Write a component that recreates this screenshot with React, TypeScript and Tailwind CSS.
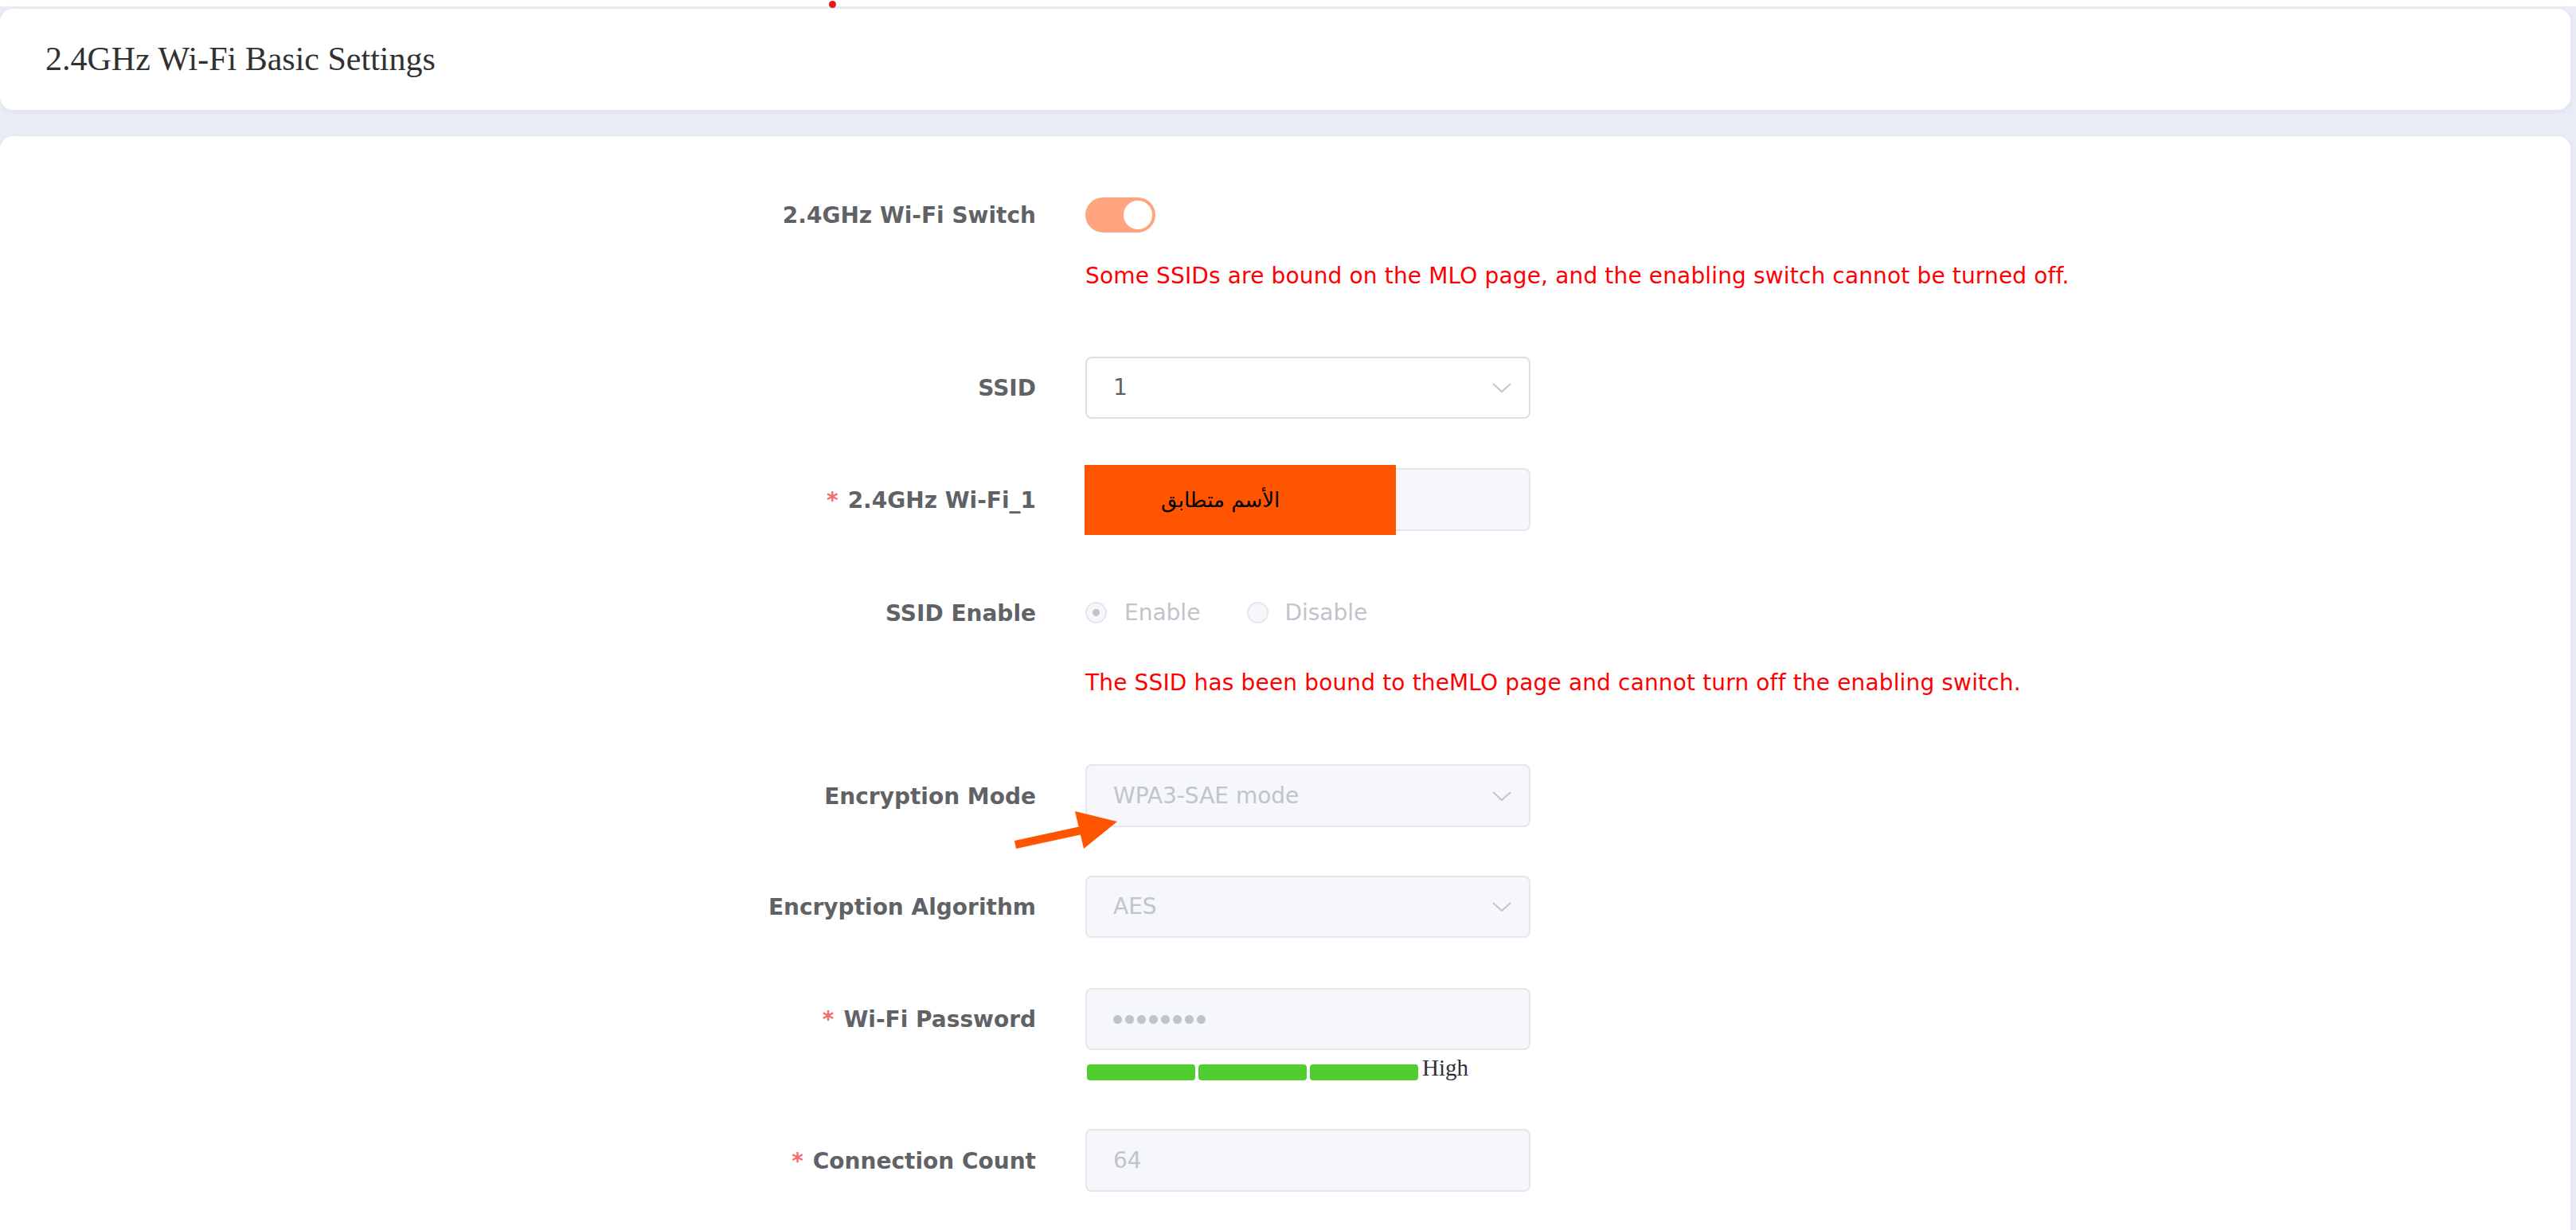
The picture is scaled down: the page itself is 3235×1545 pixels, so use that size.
import React from 'react';

const label = "font-['DejaVu_Sans',sans-serif] font-bold text-[28px] text-[#606266]";
const body = "font-['DejaVu_Sans',sans-serif] text-[28px]";

function Label({ text, required }: { text: string; required?: boolean }) {
  return (
    <div className={`w-[1301px] shrink-0 flex justify-end items-center pt-[2px] ${label}`}>
      {required && <span className="text-[#f56c6c] mr-[12px]">*</span>}
      <span>{text}</span>
    </div>
  );
}

function Chevron() {
  return (
    <svg width="24" height="12" viewBox="0 0 24 12" className="absolute right-[22px] top-1/2 -translate-y-1/2">
      <polyline points="1,1 12,11 23,1" fill="none" stroke="#c0c4cc" strokeWidth="2" />
    </svg>
  );
}

function SelectBox({ value, disabled }: { value: string; disabled?: boolean }) {
  return (
    <div
      className={`relative w-[559px] h-full flex items-center pl-[33px] rounded-[8px] border-2 ${body} ${
        disabled ? 'bg-[#f5f7fa] border-[#e4e7ed] text-[#c0c4cc]' : 'bg-white border-[#dcdfe6] text-[#606266]'
      }`}
    >
      {value}
      <Chevron />
    </div>
  );
}

export default function App() {
  return (
    <div className="relative min-h-screen bg-[#eaedf6]">
      {/* top strip + dot */}
      <div className="h-[8px] bg-white" />
      <div className="absolute left-[1041px] top-[1px] w-[9px] h-[9px] rounded-full bg-[#e3191c]" />

      <div className="pt-[3px] pr-[7px]">
        {/* header card */}
        <div className="h-[127px] bg-white rounded-[16px] shadow-[0_2px_10px_rgba(180,190,215,0.25)] flex items-center pl-[57px]">
          <h1 className="font-['Liberation_Serif',serif] text-[42px] text-[#303133]">2.4GHz Wi-Fi Basic Settings</h1>
        </div>

        {/* form card */}
        <div className="mt-[33px] bg-white rounded-[16px] shadow-[0_2px_10px_rgba(180,190,215,0.25)] pt-[60px] pb-[120px]">
          {/* switch */}
          <div className="flex h-[78px] items-center">
            <Label text="2.4GHz Wi-Fi Switch" />
            <div className="ml-[62px] w-[88px] h-[44px] rounded-full bg-[#ffa47e] flex items-center justify-end pr-[4px]">
              <div className="w-[36px] h-[36px] rounded-full bg-white" />
            </div>
          </div>
          <div className={`mt-[18px] ml-[1363px] leading-[40px] tracking-[0.15px] text-[#ff0000] ${body}`}>
            Some SSIDs are bound on the MLO page, and the enabling switch cannot be turned off.
          </div>

          {/* SSID */}
          <div className="mt-[81px] flex h-[78px] items-center">
            <Label text="SSID" />
            <div className="ml-[62px] h-full">
              <SelectBox value="1" />
            </div>
          </div>

          {/* name */}
          <div className="mt-[62px] flex h-[79px] items-center">
            <Label text="2.4GHz Wi-Fi_1" required />
            <div className="ml-[62px] h-full relative">
              <div className="w-[559px] h-full rounded-[8px] border-2 bg-[#f5f7fa] border-[#e4e7ed]" />
              <div className="absolute left-[-1px] top-[-4px] w-[391px] h-[88px] bg-[#ff5500] flex items-center">
                <span dir="rtl" className="ml-[96px] font-['DejaVu_Sans',sans-serif] text-[26px] text-black">الأسم متطابق</span>
              </div>
            </div>
          </div>

          {/* SSID enable */}
          <div className="mt-[63px] flex h-[79px] items-center">
            <Label text="SSID Enable" />
            <div className={`ml-[62px] flex items-center text-[#c0c4cc] ${body}`}>
              <div className="w-[27px] h-[27px] rounded-full border-2 border-[#e4e7ed] bg-[#f5f7fa] flex items-center justify-center">
                <div className="w-[9px] h-[9px] rounded-full bg-[#c0c4cc]" />
              </div>
              <span className="ml-[22px]">Enable</span>
              <div className="ml-[59px] w-[27px] h-[27px] rounded-full border-2 border-[#e4e7ed] bg-[#f5f7fa]" />
              <span className="ml-[20px]">Disable</span>
            </div>
          </div>
          <div className={`mt-[29px] ml-[1363px] leading-[40px] tracking-[0.15px] text-[#ff0000] ${body}`}>
            The SSID has been bound to theMLO page and cannot turn off the enabling switch.
          </div>

          {/* encryption mode */}
          <div className="relative mt-[82px] flex h-[79px] items-center">
            <Label text="Encryption Mode" />
            <div className="ml-[62px] h-full">
              <SelectBox value="WPA3-SAE mode" disabled />
            </div>
            <svg width="140" height="60" viewBox="0 0 140 60" className="absolute left-[1268px] top-[52px]">
              <line x1="7" y1="49" x2="90" y2="31" stroke="#ff5500" strokeWidth="10" />
              <polygon points="82,7 135,20 93,54" fill="#ff5500" />
            </svg>
          </div>

          {/* algorithm */}
          <div className="mt-[61px] flex h-[78px] items-center">
            <Label text="Encryption Algorithm" />
            <div className="ml-[62px] h-full">
              <SelectBox value="AES" disabled />
            </div>
          </div>

          {/* password */}
          <div className="mt-[63px] flex h-[78px] items-center">
            <Label text="Wi-Fi Password" required />
            <div className="ml-[62px] h-full">
              <div className="w-[559px] h-full rounded-[8px] border-2 bg-[#f5f7fa] border-[#e4e7ed] flex items-center pl-[33px] gap-[4px]">
                {Array.from({ length: 8 }).map((_, i) => (
                  <div key={i} className="w-[11px] h-[11px] rounded-full bg-[#c0c4cc]" />
                ))}
              </div>
            </div>
          </div>
          <div className="mt-[18px] ml-[1365px] flex items-end h-[20px]">
            <div className="w-[136px] h-[20px] rounded-[4px] bg-[#52cd30]" />
            <div className="ml-[4px] w-[136px] h-[20px] rounded-[4px] bg-[#52cd30]" />
            <div className="ml-[4px] w-[136px] h-[20px] rounded-[4px] bg-[#52cd30]" />
            <span className="ml-[5px] mb-[1px] font-['Liberation_Serif',serif] text-[29px] leading-[29px] text-[#303133]">High</span>
          </div>

          {/* connection count */}
          <div className="mt-[61px] flex h-[79px] items-center">
            <Label text="Connection Count" required />
            <div className="ml-[62px] h-full">
              <div className={`w-[559px] h-full rounded-[8px] border-2 bg-[#f5f7fa] border-[#e4e7ed] flex items-center pl-[33px] text-[#c0c4cc] ${body}`}>
                64
              </div>
            </div>
          </div>
        </div>
      </div>
    </div>
  );
}
